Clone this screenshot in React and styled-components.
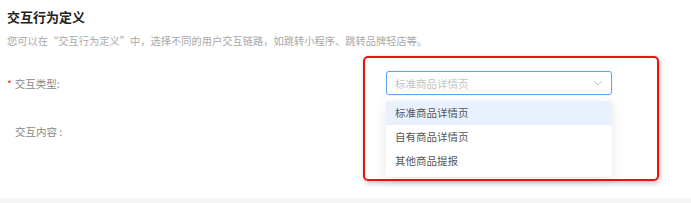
import React from "react";
import styled, { createGlobalStyle } from "styled-components";

const GlobalStyle = createGlobalStyle`
  html, body {
    margin: 0;
    padding: 0;
    background: #f5f5f6;
  }
  body {
    font-family: "Noto Sans CJK SC", "Noto Sans", sans-serif;
  }
`;

const Panel = styled.section`
  position: relative;
  height: 198px;
  box-sizing: border-box;
  padding: 7px 7px 0;
  background: #fff;
`;

const Title = styled.h3`
  margin: 0;
  font-size: 13px;
  line-height: 20px;
  font-weight: 700;
  color: #222;
`;

const Hint = styled.p`
  margin: 4px 0 0;
  font-size: 10.25px;
  line-height: 20px;
  color: #a8a8a8;
`;

const Form = styled.div`
  display: grid;
  grid-template-columns: 379px 226px;
  grid-auto-rows: 24px;
  row-gap: 24px;
  margin-top: 20px;
  align-items: center;
`;

const Label = styled.div`
  font-size: 10.5px;
  color: #888;
  padding-left: ${p => (p.required ? 0 : 8)}px;
  &::before {
    content: ${p => (p.required ? '"*"' : "none")};
    color: #f5222d;
    margin-right: 3px;
    font-size: 10px;
  }
`;

const SelectWrap = styled.div`
  position: relative;
  height: 24px;
`;

const SelectBox = styled.div`
  box-sizing: border-box;
  height: 24px;
  border: 1px solid #5aa6f8;
  border-radius: 3px;
  display: flex;
  align-items: center;
  justify-content: space-between;
  padding: 0 8px;
  font-size: 10.5px;
  color: #c2c2c2;
  box-shadow: 0 0 0 1px rgba(64, 150, 255, 0.08);
`;

const Menu = styled.ul`
  position: absolute;
  left: 0;
  right: 0;
  top: 30px;
  margin: 0;
  padding: 0 0 4px;
  list-style: none;
  background: #fff;
  box-shadow: 0 3px 12px rgba(0, 0, 0, 0.1);
  z-index: 2;
`;

const Item = styled.li`
  height: 24px;
  line-height: 24px;
  padding: 0 9px;
  font-size: 10.5px;
  color: #555;
  background: ${p => (p.active ? "#e8f1fd" : "#fff")};
`;

const Highlight = styled.div`
  position: absolute;
  left: 363px;
  top: 56px;
  width: 296px;
  height: 125px;
  box-sizing: border-box;
  border: 2.5px solid #f01010;
  border-radius: 5px;
  box-shadow: 1px 2px 5px rgba(0, 0, 0, 0.25);
  pointer-events: none;
  z-index: 3;
`;

const Chevron = () => (
  <svg width="10" height="6" viewBox="0 0 10 6" fill="none">
    <path d="M1 1l4 4 4-4" stroke="#c4c4c4" strokeWidth="1" />
  </svg>
);

export default function App() {
  const options = ["标准商品详情页", "自有商品详情页", "其他商品提报"];
  return (
    <>
      <GlobalStyle />
      <Panel>
        <Title>交互行为定义</Title>
        <Hint>您可以在“交互行为定义”中，选择不同的用户交互链路，如跳转小程序、跳转品牌轻店等。</Hint>
        <Form>
          <Label required>交互类型:</Label>
          <SelectWrap>
            <SelectBox>
              <span>标准商品详情页</span>
              <Chevron />
            </SelectBox>
            <Menu>
              {options.map((o, i) => (
                <Item key={o} active={i === 0}>{o}</Item>
              ))}
            </Menu>
          </SelectWrap>
          <Label>交互内容 :</Label>
          <div />
        </Form>
        <Highlight />
      </Panel>
    </>
  );
}
